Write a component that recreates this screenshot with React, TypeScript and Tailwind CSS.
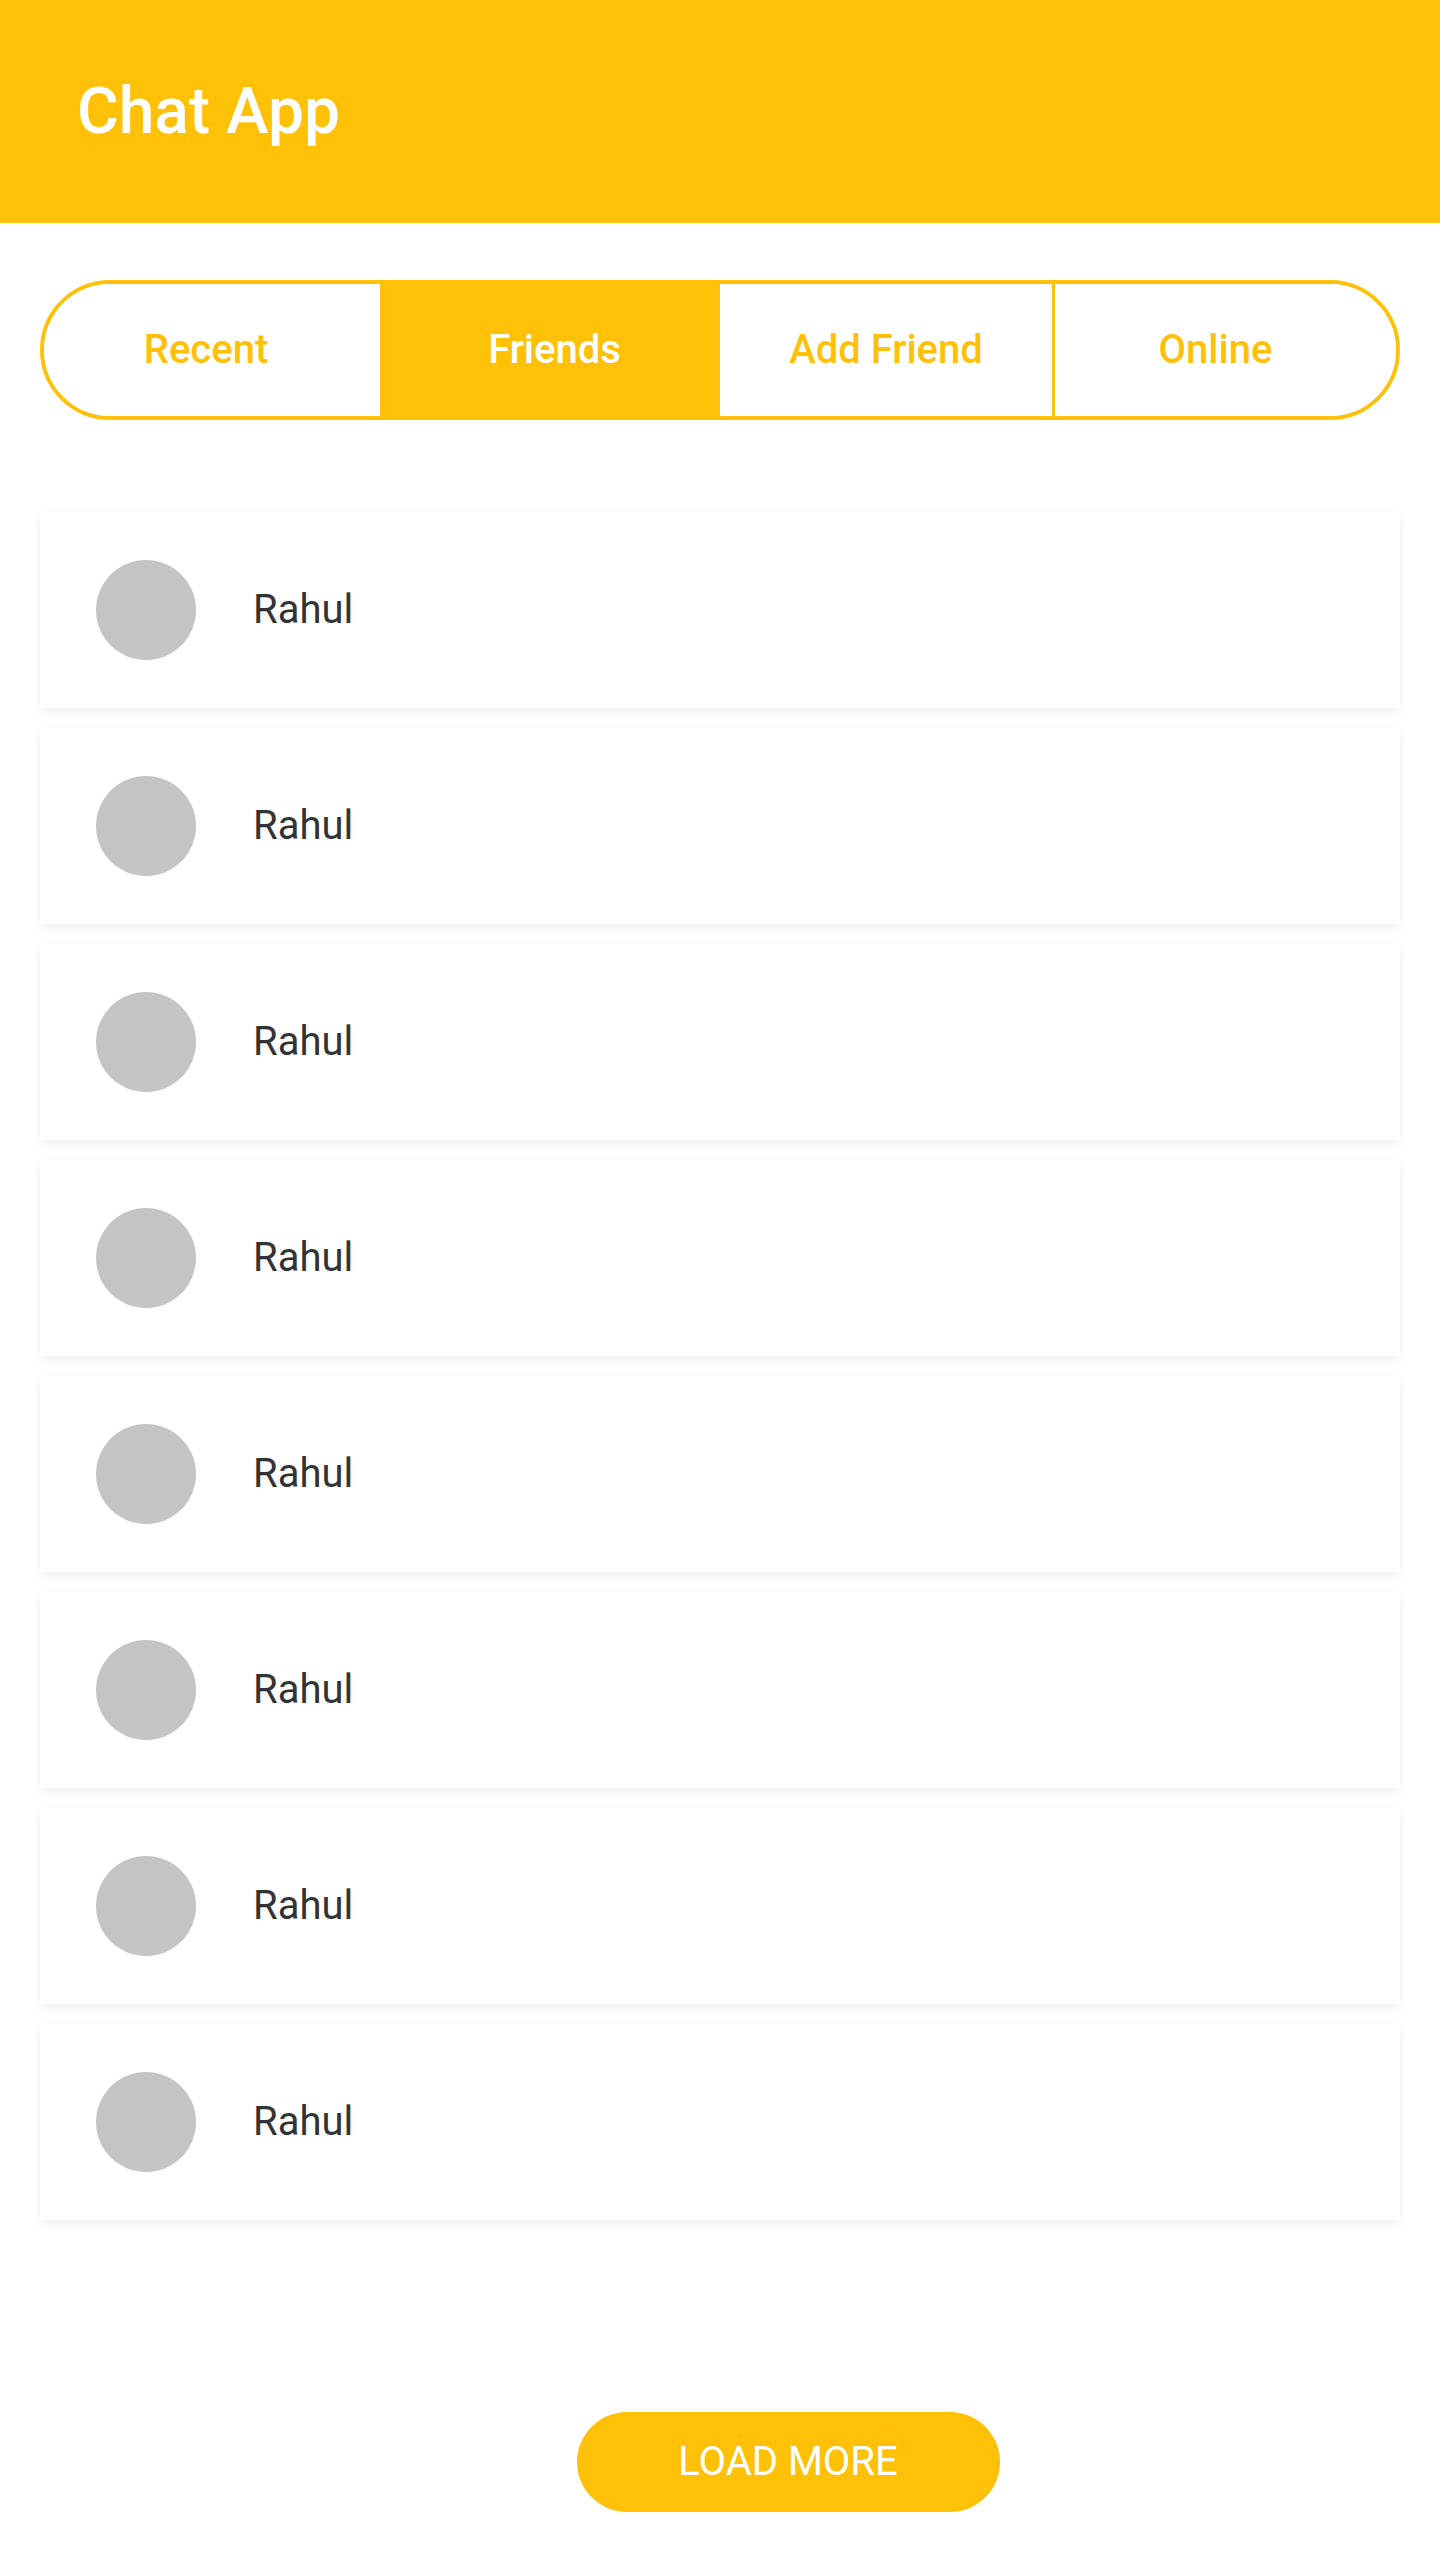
import React, { useState } from "react";

const tabs = [
  { label: "Recent", cls: "w-[336px] pr-[12px]" },
  { label: "Friends", cls: "w-[340px] pl-[9px]" },
  { label: "Add Friend", cls: "w-[332px]" },
  { label: "Online", cls: "flex-1 border-l-[3px] border-[#ffc107] pr-[20px]" },
];
const friends = Array.from({ length: 8 }, (_, i) => ({ id: i, name: "Rahul" }));

function FriendCard({ name }: { name: string }) {
  return (
    <div className="h-[196px] bg-white flex items-center pl-[56px] shadow-[0_3px_10px_rgba(0,0,0,0.07)]">
      <div className="w-[100px] h-[100px] rounded-full bg-[#c4c4c4] shrink-0" />
      <span className="ml-[57px] text-[40px] text-[#333333]">{name}</span>
    </div>
  );
}

export default function App() {
  const [active, setActive] = useState("Friends");

  return (
    <div className="min-h-[2560px] bg-white font-['Roboto',sans-serif]">
      <header className="h-[223px] bg-[#ffc107] flex items-center pl-[77px]">
        <h1 className="text-[64px] font-medium text-white leading-none">Chat App</h1>
      </header>

      <div className="px-[40px]">
        <div className="mt-[57px] h-[140px] flex rounded-full border-4 border-[#ffc107] overflow-hidden">
          {tabs.map((tab) => (
            <button
              key={tab.label}
              onClick={() => setActive(tab.label)}
              className={
                "flex items-center justify-center text-[40px] font-medium " +
                tab.cls +
                (active === tab.label ? " bg-[#ffc107] text-white" : " bg-white text-[#ffc107]")
              }
            >
              {tab.label}
            </button>
          ))}
        </div>

        <div className="mt-[92px] flex flex-col gap-[20px]">
          {friends.map((f) => (
            <FriendCard key={f.id} name={f.name} />
          ))}
        </div>

        <div className="mt-[192px] flex justify-center pl-[136px]">
          <button className="w-[423px] h-[100px] rounded-full bg-[#ffc107] text-white text-[40px] uppercase">
            Load more
          </button>
        </div>
      </div>
    </div>
  );
}
